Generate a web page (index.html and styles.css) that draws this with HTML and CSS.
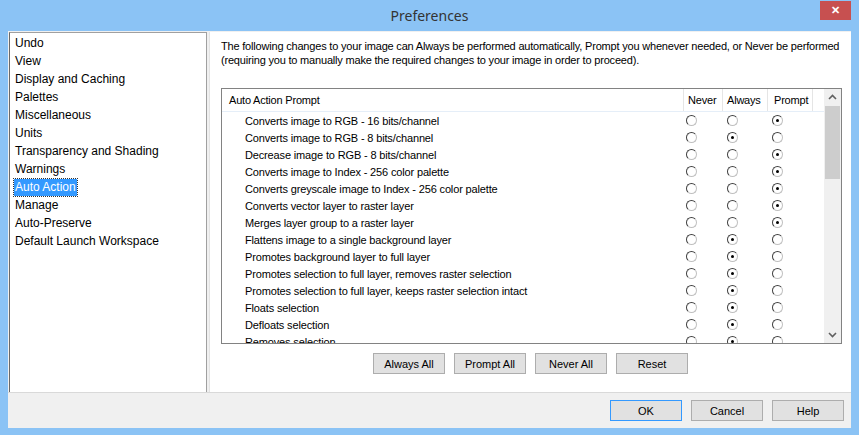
FILE: index.html
```html
<!DOCTYPE html>
<html lang="en">
<head>
    <meta charset="UTF-8">
    <title>Preferences</title>
    <link rel="stylesheet" href="styles.css">
</head>
<body>
    <div class="window">
        <div class="titlebar">
            <span class="title">Preferences</span>
            <div class="close">&#x2715;</div>
        </div>
        <div class="client">
            <div class="main">
                <ul class="nav">
                    <li>Undo</li>
                    <li>View</li>
                    <li>Display and Caching</li>
                    <li>Palettes</li>
                    <li>Miscellaneous</li>
                    <li>Units</li>
                    <li>Transparency and Shading</li>
                    <li>Warnings</li>
                    <li><span class="selected">Auto Action</span></li>
                    <li>Manage</li>
                    <li>Auto-Preserve</li>
                    <li>Default Launch Workspace</li>
                </ul>
                <div class="panel">
                    <p class="intro">The following changes to your image can Always be performed automatically, Prompt you whenever needed, or Never be performed (requiring you to manually make the required changes to your image in order to proceed).</p>
                    <div class="grid-box">
                        <div class="grid">
                            <div class="head">
                                <div class="hcell first">Auto Action Prompt</div>
                                <div class="hcell never">Never</div>
                                <div class="hcell always">Always</div>
                                <div class="hcell prompt">Prompt</div>
                                <div class="hcell filler"></div>
                            </div>
                            <div class="rows">
                                <div class="row"><span class="label">Converts image to RGB - 16 bits/channel</span><span class="c never"><i class="radio"></i></span><span class="c always"><i class="radio"></i></span><span class="c prompt"><i class="radio on"></i></span></div>
                                <div class="row"><span class="label">Converts image to RGB - 8 bits/channel</span><span class="c never"><i class="radio"></i></span><span class="c always"><i class="radio on"></i></span><span class="c prompt"><i class="radio"></i></span></div>
                                <div class="row"><span class="label">Decrease image to RGB - 8 bits/channel</span><span class="c never"><i class="radio"></i></span><span class="c always"><i class="radio"></i></span><span class="c prompt"><i class="radio on"></i></span></div>
                                <div class="row"><span class="label">Converts image to Index - 256 color palette</span><span class="c never"><i class="radio"></i></span><span class="c always"><i class="radio"></i></span><span class="c prompt"><i class="radio on"></i></span></div>
                                <div class="row"><span class="label">Converts greyscale image to Index - 256 color palette</span><span class="c never"><i class="radio"></i></span><span class="c always"><i class="radio"></i></span><span class="c prompt"><i class="radio on"></i></span></div>
                                <div class="row"><span class="label">Converts vector layer to raster layer</span><span class="c never"><i class="radio"></i></span><span class="c always"><i class="radio"></i></span><span class="c prompt"><i class="radio on"></i></span></div>
                                <div class="row"><span class="label">Merges layer group to a raster layer</span><span class="c never"><i class="radio"></i></span><span class="c always"><i class="radio"></i></span><span class="c prompt"><i class="radio on"></i></span></div>
                                <div class="row"><span class="label">Flattens image to a single background layer</span><span class="c never"><i class="radio"></i></span><span class="c always"><i class="radio on"></i></span><span class="c prompt"><i class="radio"></i></span></div>
                                <div class="row"><span class="label">Promotes background layer to full layer</span><span class="c never"><i class="radio"></i></span><span class="c always"><i class="radio on"></i></span><span class="c prompt"><i class="radio"></i></span></div>
                                <div class="row"><span class="label">Promotes selection to full layer, removes raster selection</span><span class="c never"><i class="radio"></i></span><span class="c always"><i class="radio on"></i></span><span class="c prompt"><i class="radio"></i></span></div>
                                <div class="row"><span class="label">Promotes selection to full layer, keeps raster selection intact</span><span class="c never"><i class="radio"></i></span><span class="c always"><i class="radio on"></i></span><span class="c prompt"><i class="radio"></i></span></div>
                                <div class="row"><span class="label">Floats selection</span><span class="c never"><i class="radio"></i></span><span class="c always"><i class="radio on"></i></span><span class="c prompt"><i class="radio"></i></span></div>
                                <div class="row"><span class="label">Defloats selection</span><span class="c never"><i class="radio"></i></span><span class="c always"><i class="radio on"></i></span><span class="c prompt"><i class="radio"></i></span></div>
                                <div class="row"><span class="label">Removes selection</span><span class="c never"><i class="radio"></i></span><span class="c always"><i class="radio on"></i></span><span class="c prompt"><i class="radio"></i></span></div>
                            </div>
                        </div>
                        <div class="scrollbar">
                            <svg class="arrow" width="9" height="6" viewBox="0 0 9 6"><path d="M1 5 L4.5 1.5 L8 5" fill="none" stroke="#606060" stroke-width="1.6"/></svg>
                            <div class="track"><div class="thumb"></div></div>
                            <svg class="arrow" width="9" height="6" viewBox="0 0 9 6"><path d="M1 1 L4.5 4.5 L8 1" fill="none" stroke="#606060" stroke-width="1.6"/></svg>
                        </div>
                    </div>
                    <div class="actions">
                        <button>Always All</button>
                        <button>Prompt All</button>
                        <button>Never All</button>
                        <button>Reset</button>
                    </div>
                </div>
            </div>
            <div class="footer">
                <button class="default">OK</button>
                <button>Cancel</button>
                <button>Help</button>
            </div>
        </div>
    </div>
</body>
</html>
```

FILE: styles.css
```css
body {
    margin: 0;
    background-color: #8bc3f5;
    font-family: "Liberation Sans", Arial, sans-serif;
    font-size: 11px;
    color: #000;
}
.window {
    width: 859px;
    height: 435px;
    background-color: #8bc3f5;
    display: flex;
    flex-direction: column;
}
.titlebar {
    height: 31px;
    position: relative;
    display: flex;
    align-items: center;
    justify-content: center;
}
.title {
    font-family: "Noto Sans", sans-serif;
    font-size: 14px;
    color: #333;
    margin-top: -1px;
}
.close {
    position: absolute;
    top: 1px;
    right: 8px;
    width: 31px;
    height: 19px;
    background-color: #c75050;
    color: white;
    font-size: 11px;
    font-weight: bold;
    display: flex;
    align-items: center;
    justify-content: center;
}
.client {
    flex: 1;
    margin: 0 8px 7px 8px;
    background-color: #f0f0f0;
    display: flex;
    flex-direction: column;
}
.main {
    display: flex;
    height: 361px;
    border-bottom: 1px solid #d9d9d9;
}
.nav {
    list-style: none;
    margin: 1px 0 0 1px;
    padding: 1px 0 0 5px;
    width: 191px;
    background-color: white;
    border-top: 1px solid #a0a0a0;
    border-left: 1px solid #696969;
    border-right: 1px solid #a0a0a0;
    font-family: "Liberation Sans", sans-serif;
    font-size: 12px;
}
.nav li {
    height: 18px;
    line-height: 18px;
}
.selected {
    display: inline-block;
    background-color: #3399ff;
    color: white;
    outline: 1px dotted #333;
    line-height: 17px;
    padding: 0 1px 0 1px;
    margin-left: -1px;
}
.panel {
    flex: 1;
    margin: 1px 0 0 2px;
    background-color: white;
    border-left: 1px solid #e3e3e3;
    padding: 0 0 0 11px;
}
.intro {
    margin: 7px 0 0 0;
    line-height: 14px;
    letter-spacing: -0.19px;
}
.grid-box {
    margin-top: 21px;
    width: 619px;
    height: 254px;
    border: 1px solid #828282;
    display: flex;
    overflow: hidden;
}
.grid {
    width: 602px;
}
.head {
    display: flex;
    height: 22px;
    border-bottom: 1px solid #e5eef8;
}
.hcell {
    line-height: 22px;
    border-right: 1px solid #e5e5e5;
    box-sizing: border-box;
    letter-spacing: -0.2px;
}
.hcell.first {
    width: 462px;
    padding-left: 7px;
}
.hcell.never {
    width: 39px;
    padding-left: 4px;
}
.hcell.always {
    width: 45px;
    padding-left: 4px;
}
.hcell.prompt {
    width: 45px;
    padding-left: 6px;
}
.hcell.filler {
    width: 11px;
    border-right: none;
}
.row {
    display: flex;
    height: 17px;
    align-items: center;
}
.label {
    width: 439px;
    padding-left: 23px;
    white-space: nowrap;
    letter-spacing: -0.15px;
}
.c {
    display: flex;
    align-items: center;
    padding-left: 2px;
    box-sizing: border-box;
}
.c.never {
    width: 40px;
}
.c.always {
    width: 45px;
    padding-left: 3px;
}
.c.prompt {
    width: 45px;
    padding-left: 3px;
}
.radio {
    width: 9px;
    height: 9px;
    border-radius: 50%;
    border: 1px solid;
    border-color: #404040 #c0c0c0 #c0c0c0 #404040;
    display: flex;
    align-items: center;
    justify-content: center;
}
.radio.on::after {
    content: "";
    width: 3px;
    height: 3px;
    border-radius: 50%;
    background-color: #000;
}
.scrollbar {
    width: 17px;
    background-color: #f0f0f0;
    display: flex;
    flex-direction: column;
    align-items: center;
}
.arrow {
    margin: 5px 0;
}
.track {
    flex: 1;
    width: 15px;
    margin-top: 1px;
}
.thumb {
    height: 73px;
    background-color: #cdcdcd;
}
.actions {
    display: flex;
    justify-content: center;
    gap: 9px;
    margin: 9px 0 0 -11px;
}
button {
    width: 72px;
    height: 21px;
    background-color: #e1e1e1;
    border: 1px solid #adadad;
    font-family: "Liberation Sans", sans-serif;
    font-size: 11px;
    color: #000;
    padding: 0;
}
.footer {
    display: flex;
    justify-content: flex-end;
    gap: 9px;
    padding: 7px 7px 0 0;
}
button.default {
    border-color: #3399ff;
}
```
